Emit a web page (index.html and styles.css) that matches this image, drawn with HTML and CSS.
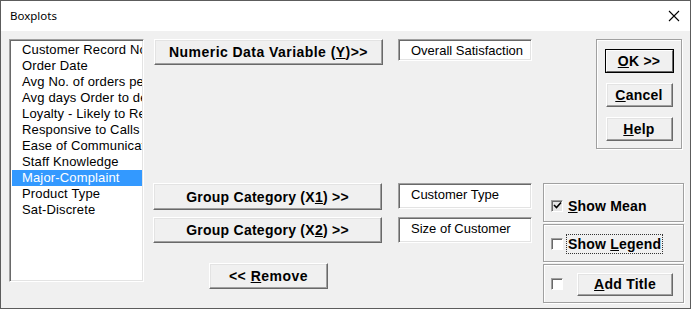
FILE: index.html
```html
<!DOCTYPE html>
<html>
<head>
<meta charset="utf-8">
<link rel="stylesheet" href="styles.css">
</head>
<body>
<div class="window">
  <div class="titlebar">
    <span class="title">Boxplots</span>
    <svg class="close" width="12" height="12" viewBox="0 0 12 12"><path d="M1 1L11 11M11 1L1 11" stroke="#000" stroke-width="1.1" fill="none"/></svg>
  </div>
  <div class="content">
    <div class="listbox">
      <div class="item">Customer Record No</div>
      <div class="item">Order Date</div>
      <div class="item">Avg No. of orders per month</div>
      <div class="item">Avg days Order to delivery</div>
      <div class="item">Loyalty - Likely to Recommend</div>
      <div class="item">Responsive to Calls</div>
      <div class="item">Ease of Communication</div>
      <div class="item">Staff Knowledge</div>
      <div class="item selected">Major-Complaint</div>
      <div class="item">Product Type</div>
      <div class="item">Sat-Discrete</div>
    </div>
    <div class="col-mid">
      <div class="btn btn-numeric">Numeric Data Variable (<u>Y</u>)&gt;&gt;</div>
      <div class="btn btn-group1">Group Category (X<u>1</u>) &gt;&gt;</div>
      <div class="btn btn-group2">Group Category (X<u>2</u>) &gt;&gt;</div>
      <div class="btn btn-remove">&lt;&lt;&nbsp;<u>R</u>emove</div>
    </div>
    <div class="col-fields">
      <div class="field field-y">Overall Satisfaction</div>
      <div class="field field-x1">Customer Type</div>
      <div class="field field-x2">Size of Customer</div>
    </div>
    <div class="col-right">
      <div class="actions">
        <div class="btn btn-ok"><span class="ok-inner"><u>O</u>K &gt;&gt;</span></div>
        <div class="btn btn-act"><u>C</u>ancel</div>
        <div class="btn btn-act"><u>H</u>elp</div>
      </div>
      <div class="frame frame-mean">
        <span class="check checked"><svg width="9" height="9" viewBox="0 0 9 9"><path d="M1 4L3.5 6.5L8 1.5" stroke="#000" stroke-width="1.6" fill="none"/></svg></span>
        <span class="label"><u>S</u>how Mean</span>
      </div>
      <div class="frame frame-legend">
        <span class="check"></span>
        <span class="label focus">Show <u>L</u>egend</span>
      </div>
      <div class="frame frame-title">
        <span class="check"></span>
        <div class="btn btn-title"><u>A</u>dd Title</div>
      </div>
    </div>
  </div>
</div>
</body>
</html>
```
FILE: styles.css
```css
html, body {
  margin: 0;
  padding: 0;
  background: #f0f0f0;
}
.window {
  width: 691px;
  height: 309px;
  box-sizing: border-box;
  border: 1px solid #5c5c5c;
  background: #f0f0f0;
  overflow: hidden;
  font-family: "Liberation Sans", Arial, sans-serif;
  font-size: 13px;
  color: #000;
}
.titlebar {
  height: 30px;
  background: #fff;
  display: flex;
  align-items: center;
  justify-content: space-between;
  padding: 0 10px 0 9px;
}
.title {
  font-family: "Noto Sans", "DejaVu Sans", sans-serif;
  font-size: 11.5px;
  padding-bottom: 1px;
}
.close {
  display: block;
}
.content {
  display: flex;
  padding: 8px 0 0 8px;
}
.listbox {
  width: 135px;
  height: 243px;
  box-sizing: border-box;
  background: #fff;
  border-top: 1px solid #a0a0a0;
  border-left: 1px solid #a0a0a0;
  border-right: 1px solid #fff;
  border-bottom: 1px solid #fff;
  box-shadow: inset 1px 1px 0 #696969, inset -1px -1px 0 #e3e3e3;
  padding: 2px 1px 0 2px;
  overflow: hidden;
}
.item {
  height: 16px;
  line-height: 16px;
  padding-left: 10px;
  white-space: nowrap;
  overflow: hidden;
  letter-spacing: 0.15px;
}
.item.selected {
  background: #3399ff;
  color: #fff;
}
.btn {
  box-sizing: border-box;
  background: #f0f0f0;
  border-top: 1px solid #fff;
  border-left: 1px solid #fff;
  border-right: 1px solid #696969;
  border-bottom: 1px solid #696969;
  box-shadow: inset -1px -1px 0 #a0a0a0, inset 1px 1px 0 #e3e3e3;
  font-weight: bold;
  font-size: 14px;
  letter-spacing: 0.25px;
  display: flex;
  align-items: center;
  justify-content: center;
  white-space: nowrap;
}
.col-mid {
  width: 231px;
  margin-left: 9px;
  display: flex;
  flex-direction: column;
}
.btn-numeric {
  width: 229px;
  height: 26px;
  margin-left: 1px;
  letter-spacing: 0.45px;
}
.btn-group1 {
  width: 229px;
  height: 27px;
  margin-top: 118px;
}
.btn-group2 {
  width: 229px;
  height: 26px;
  margin-top: 7px;
}
.btn-remove {
  width: 119px;
  height: 26px;
  margin-top: 20px;
  margin-left: 56px;
  letter-spacing: 0.5px;
}
.col-fields {
  width: 134px;
  margin-left: 14px;
  display: flex;
  flex-direction: column;
}
.field {
  box-sizing: border-box;
  background: #fff;
  border-top: 1px solid #a0a0a0;
  border-left: 1px solid #a0a0a0;
  border-right: 1px solid #fff;
  border-bottom: 1px solid #fff;
  box-shadow: inset 1px 1px 0 #696969, inset -1px -1px 0 #e3e3e3;
  padding: 3px 0 0 12px;
  white-space: nowrap;
  overflow: hidden;
}
.field-y {
  height: 22px;
}
.field-x1 {
  height: 26px;
  margin-top: 122px;
}
.field-x2 {
  height: 26px;
  margin-top: 8px;
}
.col-right {
  width: 141px;
  margin-left: 11px;
  display: flex;
  flex-direction: column;
}
.actions {
  width: 86px;
  height: 110px;
  box-sizing: border-box;
  margin-left: 53px;
  border: 1px solid #a0a0a0;
  box-shadow: inset 1px 1px 0 #fff, 1px 1px 0 #fff;
  display: flex;
  flex-direction: column;
  align-items: center;
  padding-top: 9px;
  gap: 10px;
}
.btn-ok {
  width: 69px;
  height: 24px;
  border: 1px solid #000;
  box-shadow: none;
  padding: 0;
}
.ok-inner {
  box-sizing: border-box;
  width: 100%;
  height: 100%;
  display: flex;
  align-items: center;
  justify-content: center;
  border-top: 1px solid #fff;
  border-left: 1px solid #fff;
  border-right: 1px solid #696969;
  border-bottom: 1px solid #696969;
}
.btn-act {
  width: 67px;
  height: 24px;
}
.frame {
  box-sizing: border-box;
  width: 141px;
  border: 1px solid #a0a0a0;
  box-shadow: inset 1px 1px 0 #fff, 1px 1px 0 #fff;
  display: flex;
  align-items: center;
  padding-left: 7px;
  font-weight: bold;
  font-size: 14px;
  letter-spacing: 0.2px;
}
.frame-mean {
  height: 39px;
  margin-top: 34px;
  padding-top: 6px;
}
.frame-legend {
  height: 38px;
  margin-top: 2px;
  padding-top: 1px;
}
.frame-title {
  height: 39px;
  margin-top: 2px;
}
.check {
  box-sizing: border-box;
  width: 12px;
  height: 12px;
  border-top: 1px solid #a0a0a0;
  border-left: 1px solid #a0a0a0;
  border-right: 1px solid #fff;
  border-bottom: 1px solid #fff;
  box-shadow: inset 1px 1px 0 #696969;
  background: #fff;
  display: flex;
  align-items: center;
  justify-content: center;
  flex: none;
}
.check.checked {
  background: #e6e6e6;
}
.check svg {
  display: block;
}
.label {
  margin-left: 3px;
  padding: 1px 1px;
  border: 1px solid transparent;
}
.label.focus {
  border: 1px dotted #333;
}
.btn-title {
  width: 96px;
  height: 23px;
  margin-left: 14px;
  margin-top: 1px;
}
```
